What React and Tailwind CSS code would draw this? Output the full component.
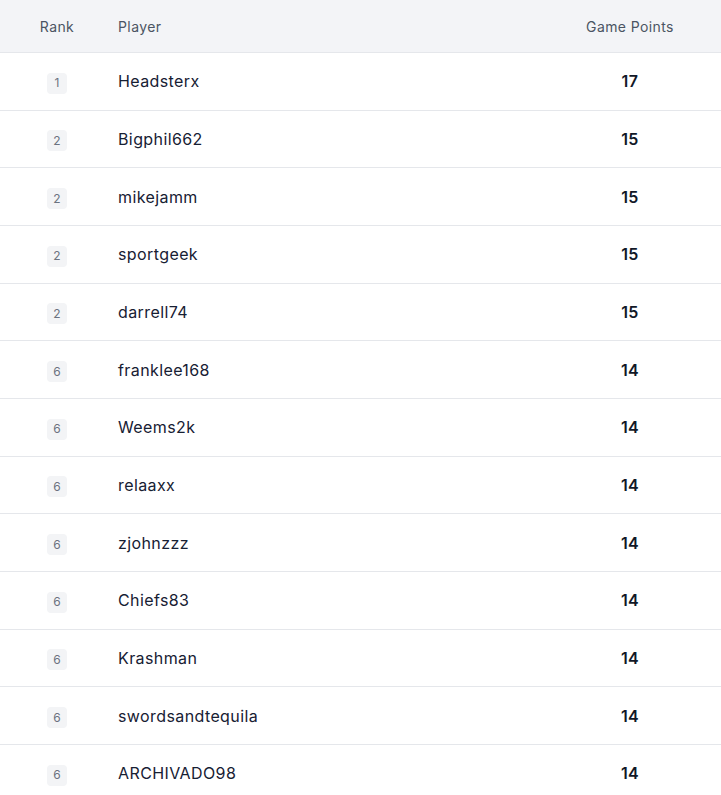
const players = [
  { rank: 1, name: "Headsterx", points: 17 },
  { rank: 2, name: "Bigphil662", points: 15 },
  { rank: 2, name: "mikejamm", points: 15 },
  { rank: 2, name: "sportgeek", points: 15 },
  { rank: 2, name: "darrell74", points: 15 },
  { rank: 6, name: "franklee168", points: 14 },
  { rank: 6, name: "Weems2k", points: 14 },
  { rank: 6, name: "relaaxx", points: 14 },
  { rank: 6, name: "zjohnzzz", points: 14 },
  { rank: 6, name: "Chiefs83", points: 14 },
  { rank: 6, name: "Krashman", points: 14 },
  { rank: 6, name: "swordsandtequila", points: 14 },
  { rank: 6, name: "ARCHIVADO98", points: 14 },
];

const App = () => {
  return (
    <div className="w-[721px] h-[795px] overflow-hidden bg-white font-['Inter',sans-serif] tracking-wide">
      {/* header */}
      <div className="flex items-center h-[53px] bg-[#f3f4f7] border-b border-[#e5e7eb] text-[14px] text-[#4b5563]">
        <div className="w-[114px] text-center">Rank</div>
        <div className="flex-1 pl-1">Player</div>
        <div className="w-[182px] text-center">Game Points</div>
      </div>

      {players.map((p, i) => (
        <div
          key={i}
          className="flex items-center h-[57.67px] border-b border-[#e5e7eb]"
        >
          <div className="w-[114px] flex justify-center pt-1">
            <span className="flex items-center justify-center w-[20px] h-[21px] rounded bg-[#f3f4f6] text-[12px] tracking-normal text-[#6b7280]">
              {p.rank}
            </span>
          </div>
          <div className="flex-1 pl-1 text-[16px] font-normal text-[#172033]">
            {p.name}
          </div>
          <div className="w-[182px] text-center text-[16px] font-semibold text-[#111827]">
            {p.points}
          </div>
        </div>
      ))}
    </div>
  );
};

export default App;
